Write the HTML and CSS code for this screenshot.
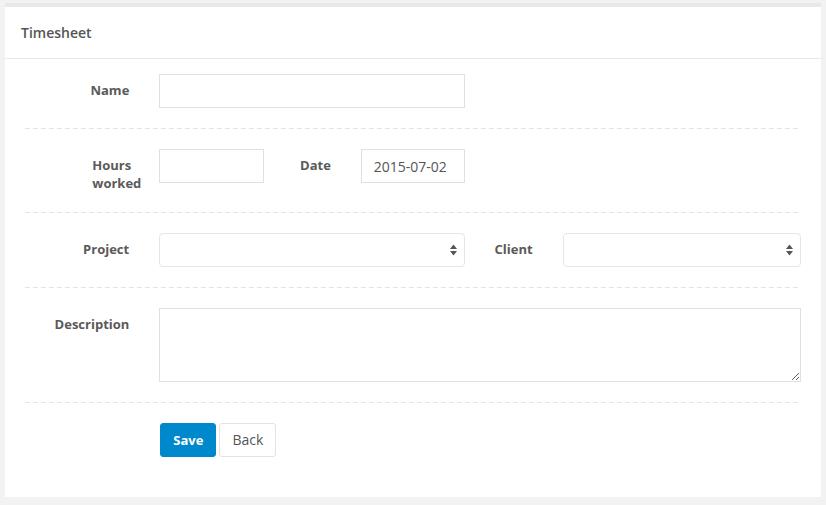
FILE: index.html
```html
<!DOCTYPE html>
<html>
<head>
<meta charset="utf-8">
<title>Timesheet</title>
<link rel="stylesheet" href="styles.css">
</head>
<body>
<div class="panel">
  <div class="panel-heading">Timesheet</div>
  <form class="panel-body">
    <div class="form-group">
      <label class="label span-2">Name</label>
      <div class="span-5"><input class="control" type="text"></div>
    </div>
    <div class="form-group">
      <label class="label span-2"><span class="wrap">Hours<br>worked</span></label>
      <div class="span-2"><input class="control" type="text"></div>
      <label class="label span-1">Date</label>
      <div class="span-2"><input class="control" type="text" value="2015-07-02"></div>
    </div>
    <div class="form-group">
      <label class="label span-2">Project</label>
      <div class="span-5 select-wrap">
        <select class="control select"><option></option></select>
        <svg class="arrows" width="7" height="12" viewBox="0 0 7 12"><path d="M3.5 0.5 L7 5 L0 5 Z M0 7 L7 7 L3.5 11.5 Z" fill="#555"/></svg>
      </div>
      <label class="label span-1">Client</label>
      <div class="span-4 select-wrap">
        <select class="control select"><option></option></select>
        <svg class="arrows" width="7" height="12" viewBox="0 0 7 12"><path d="M3.5 0.5 L7 5 L0 5 Z M0 7 L7 7 L3.5 11.5 Z" fill="#555"/></svg>
      </div>
    </div>
    <div class="form-group">
      <label class="label span-2">Description</label>
      <div class="span-10"><textarea class="control textarea"></textarea></div>
    </div>
    <div class="form-group last">
      <div class="actions">
        <button type="button" class="btn btn-primary">Save</button>
        <button type="button" class="btn btn-default">Back</button>
      </div>
    </div>
  </form>
</div>
</body>
</html>
```

FILE: styles.css
```css
html, body {
  margin: 0;
  padding: 0;
}
body {
  background: #f2f2f2;
  font-family: "Open Sans", "Liberation Sans", sans-serif;
  color: #555;
  height: 505px;
  overflow: hidden;
}
.panel {
  margin: 3px 5px 0 5px;
  width: 816px;
  background: #fff;
  border-top: 4px solid #e5e9ec;
}
.panel-heading {
  height: 51px;
  line-height: 52px;
  padding-left: 16px;
  font-size: 14px;
  font-weight: 600;
  color: #555;
  border-bottom: 1px solid #e8e8e8;
}
.panel-body {
  margin: 0;
  padding: 15px 20px 20px 20px;
}
.form-group {
  display: grid;
  grid-template-columns: repeat(12, 1fr);
  column-gap: 30px;
  padding-bottom: 21px;
  margin-bottom: 20px;
  background: repeating-linear-gradient(to right, #e3e3e3 0, #e3e3e3 5px, transparent 5px, transparent 8px) left bottom / 100% 1px no-repeat;
}
.form-group.last {
  background: none;
  margin-bottom: 0;
  padding-bottom: 20px;
}
.span-1 { grid-column: span 1; }
.span-2 { grid-column: span 2; }
.span-4 { grid-column: span 4; }
.span-5 { grid-column: span 5; }
.span-10 { grid-column: span 10; }
.label {
  text-align: right;
  padding-top: 7px;
  font-size: 13px;
  font-weight: 700;
  line-height: 18px;
  color: #5a5a5a;
  white-space: nowrap;
}
.wrap {
  display: inline-block;
  text-align: left;
  margin-right: -12px;
}
.control {
  display: block;
  box-sizing: border-box;
  width: 100%;
  height: 34px;
  margin: 0;
  padding: 6px 12px;
  font-family: "Open Sans", "Liberation Sans", sans-serif;
  font-size: 14px;
  line-height: 20px;
  color: #555;
  background: #fff;
  border: 1px solid #e0e0e0;
  border-radius: 0;
  outline: none;
}
.select-wrap {
  position: relative;
}
.select {
  -webkit-appearance: none;
  appearance: none;
  border-radius: 4px;
  border-color: #e6e6e6;
}
.arrows {
  position: absolute;
  right: 8px;
  top: 11px;
}
.textarea {
  height: 74px;
  resize: vertical;
}
.actions {
  grid-column: 3 / span 10;
  display: flex;
  gap: 3px;
  padding-left: 1px;
}
.btn {
  box-sizing: border-box;
  height: 34px;
  padding: 6px 12px;
  font-family: "Open Sans", "Liberation Sans", sans-serif;
  font-size: 13px;
  line-height: 20px;
  border-radius: 3px;
  cursor: pointer;
}
.btn-primary {
  background: #0088cc;
  border: 1px solid #0088cc;
  color: #fff;
  font-weight: 700;
}
.btn-default {
  background: #fff;
  border: 1px solid #e3e3e3;
  color: #555;
  font-size: 14px;
}
```
